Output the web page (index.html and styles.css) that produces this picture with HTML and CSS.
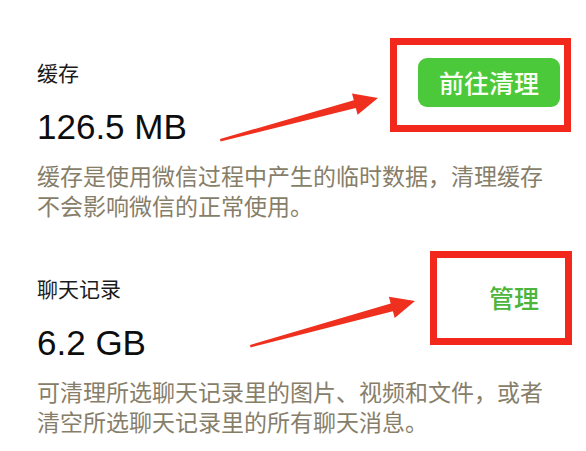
FILE: index.html
```html
<!DOCTYPE html>
<html lang="zh-CN">
<head>
<meta charset="utf-8">
<title>存储空间</title>
<link rel="stylesheet" href="styles.css">
</head>
<body>
<main class="page">
  <section class="item">
    <div class="row">
      <div class="info">
        <div class="title">缓存</div>
        <div class="value">126.5 MB</div>
      </div>
      <button class="btn-primary">前往清理</button>
    </div>
    <p class="desc">缓存是使用微信过程中产生的临时数据，清理缓存不会影响微信的正常使用。</p>
    <div class="mark mark-cache"></div>
  </section>
  <section class="item">
    <div class="row">
      <div class="info">
        <div class="title">聊天记录</div>
        <div class="value">6.2 GB</div>
      </div>
      <button class="btn-link">管理</button>
    </div>
    <p class="desc">可清理所选聊天记录里的图片、视频和文件，或者清空所选聊天记录里的所有聊天消息。</p>
    <div class="mark mark-chat"></div>
  </section>
  <svg class="arrows" width="586" height="451" viewBox="0 0 586 451" aria-hidden="true">
    <polygon points="220,139 353.8,100.3 352,93.6 378,98 357.6,114.8 355.8,108.1 220.5,141.5"/>
    <polygon points="250,345 390.7,303.4 388.9,296.7 415,301 394.7,317.9 392.9,311.2 250.5,347.5"/>
  </svg>
</main>
</body>
</html>
```

FILE: styles.css
```css
html, body {
  margin: 0;
  padding: 0;
  background: #ffffff;
}

.page {
  position: relative;
  width: 586px;
  height: 451px;
  overflow: hidden;
  padding: 57px 26px 0 37px;
  box-sizing: border-box;
  display: flex;
  flex-direction: column;
  gap: 53px;
  font-family: "Noto Sans CJK SC", "Noto Sans", sans-serif;
}

.item {
  position: relative;
}

.row {
  display: flex;
  justify-content: space-between;
  align-items: flex-start;
}

.info {
  display: flex;
  flex-direction: column;
}

.title {
  font-size: 21px;
  line-height: 30px;
  color: #1b1b1b;
}

.value {
  margin-top: 18px;
  font-family: "Liberation Sans", Arial, sans-serif;
  font-size: 35px;
  line-height: 44px;
  color: #0d0d0d;
}

.desc {
  margin: 11px 0 0 0;
  font-size: 23px;
  line-height: 30px;
  color: #877e69;
}

.btn-primary {
  border: none;
  margin: 1px 0 0 0;
  padding: 0 21px;
  height: 49px;
  border-radius: 9px;
  background: #4cc93b;
  color: #fbfff4;
  font-family: "Noto Sans CJK SC", sans-serif;
  font-size: 25px;
  font-weight: 500;
  line-height: 49px;
}

.btn-link {
  border: none;
  background: none;
  margin: 0 21px 0 0;
  padding: 0;
  height: 49px;
  color: #4bb53c;
  font-family: "Noto Sans CJK SC", sans-serif;
  font-size: 25px;
  font-weight: 500;
  line-height: 49px;
}

.mark {
  position: absolute;
  border: 7px solid #f2281c;
  box-sizing: border-box;
}

.mark-cache {
  top: -19px;
  left: 353px;
  width: 181px;
  height: 94px;
}

.mark-chat {
  top: -22px;
  left: 393px;
  width: 142px;
  height: 94px;
}

.arrows {
  position: absolute;
  left: 0;
  top: 0;
  pointer-events: none;
}

.arrows polygon {
  fill: #f0301e;
}
```
